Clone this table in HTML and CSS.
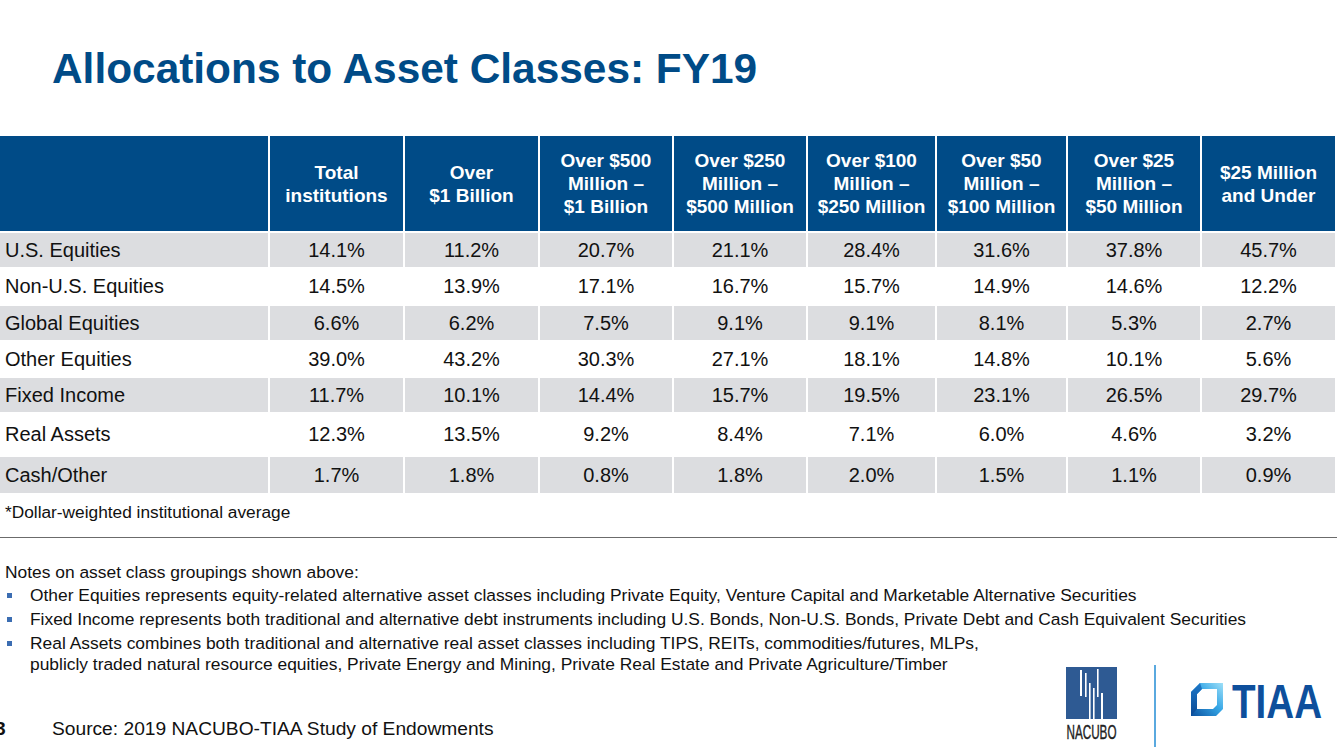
FILE: index.html
```html
<!DOCTYPE html>
<html lang="en">
<head>
<meta charset="utf-8">
<title>Allocations to Asset Classes: FY19</title>
<link rel="stylesheet" href="styles.css">
</head>
<body>
<div class="slide">
  <h1 class="title">Allocations to Asset Classes: FY19</h1>

  <table class="alloc">
    <colgroup>
      <col class="c-label">
      <col class="c-135"><col class="c-135"><col class="c-134"><col class="c-134">
      <col class="c-129"><col class="c-131"><col class="c-134"><col class="c-135">
    </colgroup>
    <thead>
      <tr class="head">
        <th></th>
        <th>Total<br>institutions</th>
        <th>Over<br>$1 Billion</th>
        <th>Over $500<br>Million –<br>$1 Billion</th>
        <th>Over $250<br>Million –<br>$500 Million</th>
        <th>Over $100<br>Million –<br>$250 Million</th>
        <th>Over $50<br>Million –<br>$100 Million</th>
        <th>Over $25<br>Million –<br>$50 Million</th>
        <th>$25 Million<br>and Under</th>
      </tr>
    </thead>
    <tbody>
      <tr class="r1 shade"><td>U.S. Equities</td><td>14.1%</td><td>11.2%</td><td>20.7%</td><td>21.1%</td><td>28.4%</td><td>31.6%</td><td>37.8%</td><td>45.7%</td></tr>
      <tr class="r2"><td>Non-U.S. Equities</td><td>14.5%</td><td>13.9%</td><td>17.1%</td><td>16.7%</td><td>15.7%</td><td>14.9%</td><td>14.6%</td><td>12.2%</td></tr>
      <tr class="r3 shade"><td>Global Equities</td><td>6.6%</td><td>6.2%</td><td>7.5%</td><td>9.1%</td><td>9.1%</td><td>8.1%</td><td>5.3%</td><td>2.7%</td></tr>
      <tr class="r4"><td>Other Equities</td><td>39.0%</td><td>43.2%</td><td>30.3%</td><td>27.1%</td><td>18.1%</td><td>14.8%</td><td>10.1%</td><td>5.6%</td></tr>
      <tr class="r5 shade"><td>Fixed Income</td><td>11.7%</td><td>10.1%</td><td>14.4%</td><td>15.7%</td><td>19.5%</td><td>23.1%</td><td>26.5%</td><td>29.7%</td></tr>
      <tr class="r6"><td>Real Assets</td><td>12.3%</td><td>13.5%</td><td>9.2%</td><td>8.4%</td><td>7.1%</td><td>6.0%</td><td>4.6%</td><td>3.2%</td></tr>
      <tr class="r7 shade"><td>Cash/Other</td><td>1.7%</td><td>1.8%</td><td>0.8%</td><td>1.8%</td><td>2.0%</td><td>1.5%</td><td>1.1%</td><td>0.9%</td></tr>
    </tbody>
  </table>

  <p class="footnote">*Dollar-weighted institutional average</p>
  <hr class="rule">

  <section class="notes">
    <p class="notes-intro">Notes on asset class groupings shown above:</p>
    <ul class="bullets">
      <li class="b-full">Other Equities represents equity-related alternative asset classes including Private Equity, Venture Capital and Marketable Alternative Securities</li>
      <li class="b-full">Fixed Income represents both traditional and alternative debt instruments including U.S. Bonds, Non-U.S. Bonds, Private Debt and Cash Equivalent Securities</li>
      <li class="b-left">Real Assets combines both traditional and alternative real asset classes including TIPS, REITs, commodities/futures, MLPs,<br>publicly traded natural resource equities, Private Energy and Mining, Private Real Estate and Private Agriculture/Timber</li>
    </ul>
    <div class="source-row">
      <span class="page-num">3</span>
      <span class="source">Source: 2019 NACUBO-TIAA Study of Endowments</span>
    </div>
    <div class="logos">
      <svg class="nacubo" width="54" height="76" viewBox="0 0 54 76" aria-label="NACUBO">
        <rect x="0" y="0" width="51" height="52" fill="#2e5a93"/>
        <rect x="14" y="3" width="2" height="26" fill="#fff"/>
        <rect x="19" y="6" width="1.6" height="24" fill="#fff"/>
        <rect x="23" y="16" width="1.6" height="36" fill="#fff"/>
        <rect x="27" y="21" width="1.6" height="31" fill="#fff"/>
        <rect x="31" y="2" width="1.6" height="28" fill="#fff"/>
        <rect x="35" y="26" width="2" height="26" fill="#fff"/>
        <text x="0.5" y="72" font-family="Liberation Sans, Arial, sans-serif" font-size="19.5" fill="#222" stroke="#222" stroke-width="0.4" textLength="50" lengthAdjust="spacingAndGlyphs">NACUBO</text>
      </svg>
      <span class="divider"></span>
      <svg class="tiaa" width="134" height="42" viewBox="0 0 134 42" aria-label="TIAA">
        <defs>
          <linearGradient id="tg" x1="1" y1="0" x2="0" y2="1">
            <stop offset="0" stop-color="#9fe0f8"/>
            <stop offset="0.45" stop-color="#35a6e6"/>
            <stop offset="1" stop-color="#0a4f9e"/>
          </linearGradient>
          <linearGradient id="tl" x1="0" y1="0" x2="0" y2="1">
            <stop offset="0" stop-color="#1e78c8"/>
            <stop offset="1" stop-color="#0b4a95"/>
          </linearGradient>
        </defs>
        <path d="M9 0 H32 V26 L25 33 H0 V9 Z M11 6 H26 V22 L22 26 H6 V11 Z" fill="url(#tg)" fill-rule="evenodd"/>
        <path d="M9 0 L11 6 L6 11 V26 L0 33 V9 Z" fill="url(#tl)"/>
        <text x="41" y="35" font-family="Liberation Sans, Arial, sans-serif" font-weight="bold" font-size="48" fill="#0e4f9c" textLength="90" lengthAdjust="spacingAndGlyphs">TIAA</text>
      </svg>
    </div>
  </section>
</div>
</body>
</html>
```
FILE: styles.css
```css
html, body {
  margin: 0;
  padding: 0;
  background: #fff;
}

body {
  font-family: "Liberation Sans", Arial, sans-serif;
  color: #111;
  width: 1337px;
  height: 756px;
  overflow: hidden;
}

.slide {
  width: 1337px;
}

.title {
  margin: 45px 0 0 52px;
  font-size: 42.4px;
  line-height: 48px;
  font-weight: bold;
  color: #004b87;
}

.alloc {
  margin-top: 43px;
  width: 1335px;
  table-layout: fixed;
  border-collapse: separate;
  border-spacing: 0;
}

.c-label { width: 268px; }
.c-135 { width: 135px; }
.c-134 { width: 134px; }
.c-131 { width: 131px; }
.c-129 { width: 129px; }

.alloc th,
.alloc td {
  padding: 0;
  vertical-align: middle;
  text-align: center;
  border-left: 2px solid #fff;
}

.alloc th:first-child,
.alloc td:first-child {
  border-left: 0;
  text-align: left;
  padding-left: 5px;
}

.head { height: 97px; }

.alloc th {
  background: #004b87;
  color: #fff;
  font-size: 19px;
  line-height: 23px;
  font-weight: bold;
  border-bottom: 2px solid #fff;
}

.alloc td {
  font-size: 20px;
  line-height: 23px;
}

.shade td { background: #dcdde0; }

.r1 { height: 34px; }
.r2 { height: 39px; }
.r3 { height: 34px; }
.r4 { height: 38px; }
.r5 { height: 34px; }
.r6 { height: 45px; }
.r7 { height: 36px; }

.footnote {
  margin: 9px 0 0 5px;
  font-size: 17.3px;
  line-height: 20px;
}

.rule {
  margin: 15px 0 0 0;
  border: 0;
  height: 1px;
  background: #6b6b6b;
}

.notes {
  display: grid;
  grid-template-columns: 1fr auto;
  font-size: 17.4px;
}

.notes-intro {
  grid-column: 1 / -1;
  margin: 24px 0 0 5px;
  line-height: 20px;
}

.bullets {
  display: contents;
}

.bullets li {
  display: flex;
  align-items: flex-start;
  margin-top: 3px;
  line-height: 21px;
}

.bullets li::before {
  content: "";
  flex: none;
  width: 5px;
  height: 5px;
  margin: 8px 18px 0 7px;
  background: #3b6db2;
}

.b-full { grid-column: 1 / -1; }
.b-left { grid-column: 1; grid-row: 4; }

.source-row {
  grid-column: 1;
  grid-row: 5;
  display: flex;
  align-items: center;
  margin-top: 43px;
  line-height: 22px;
  font-size: 19.2px;
}

.page-num {
  width: 10px;
  margin-left: -5px;
  margin-right: 47px;
  font-weight: bold;
}

.logos {
  grid-column: 2;
  grid-row: 4 / span 2;
  align-self: start;
  display: flex;
  align-items: flex-start;
  margin-top: 35px;
  margin-bottom: -13px;
  padding-right: 12px;
}

.nacubo {
  display: block;
  margin-top: 2px;
}

.divider {
  width: 2px;
  height: 82px;
  margin: 0 35px 0 34px;
  background: #5aa9df;
}

.tiaa {
  display: block;
  margin-top: 18px;
}
```
